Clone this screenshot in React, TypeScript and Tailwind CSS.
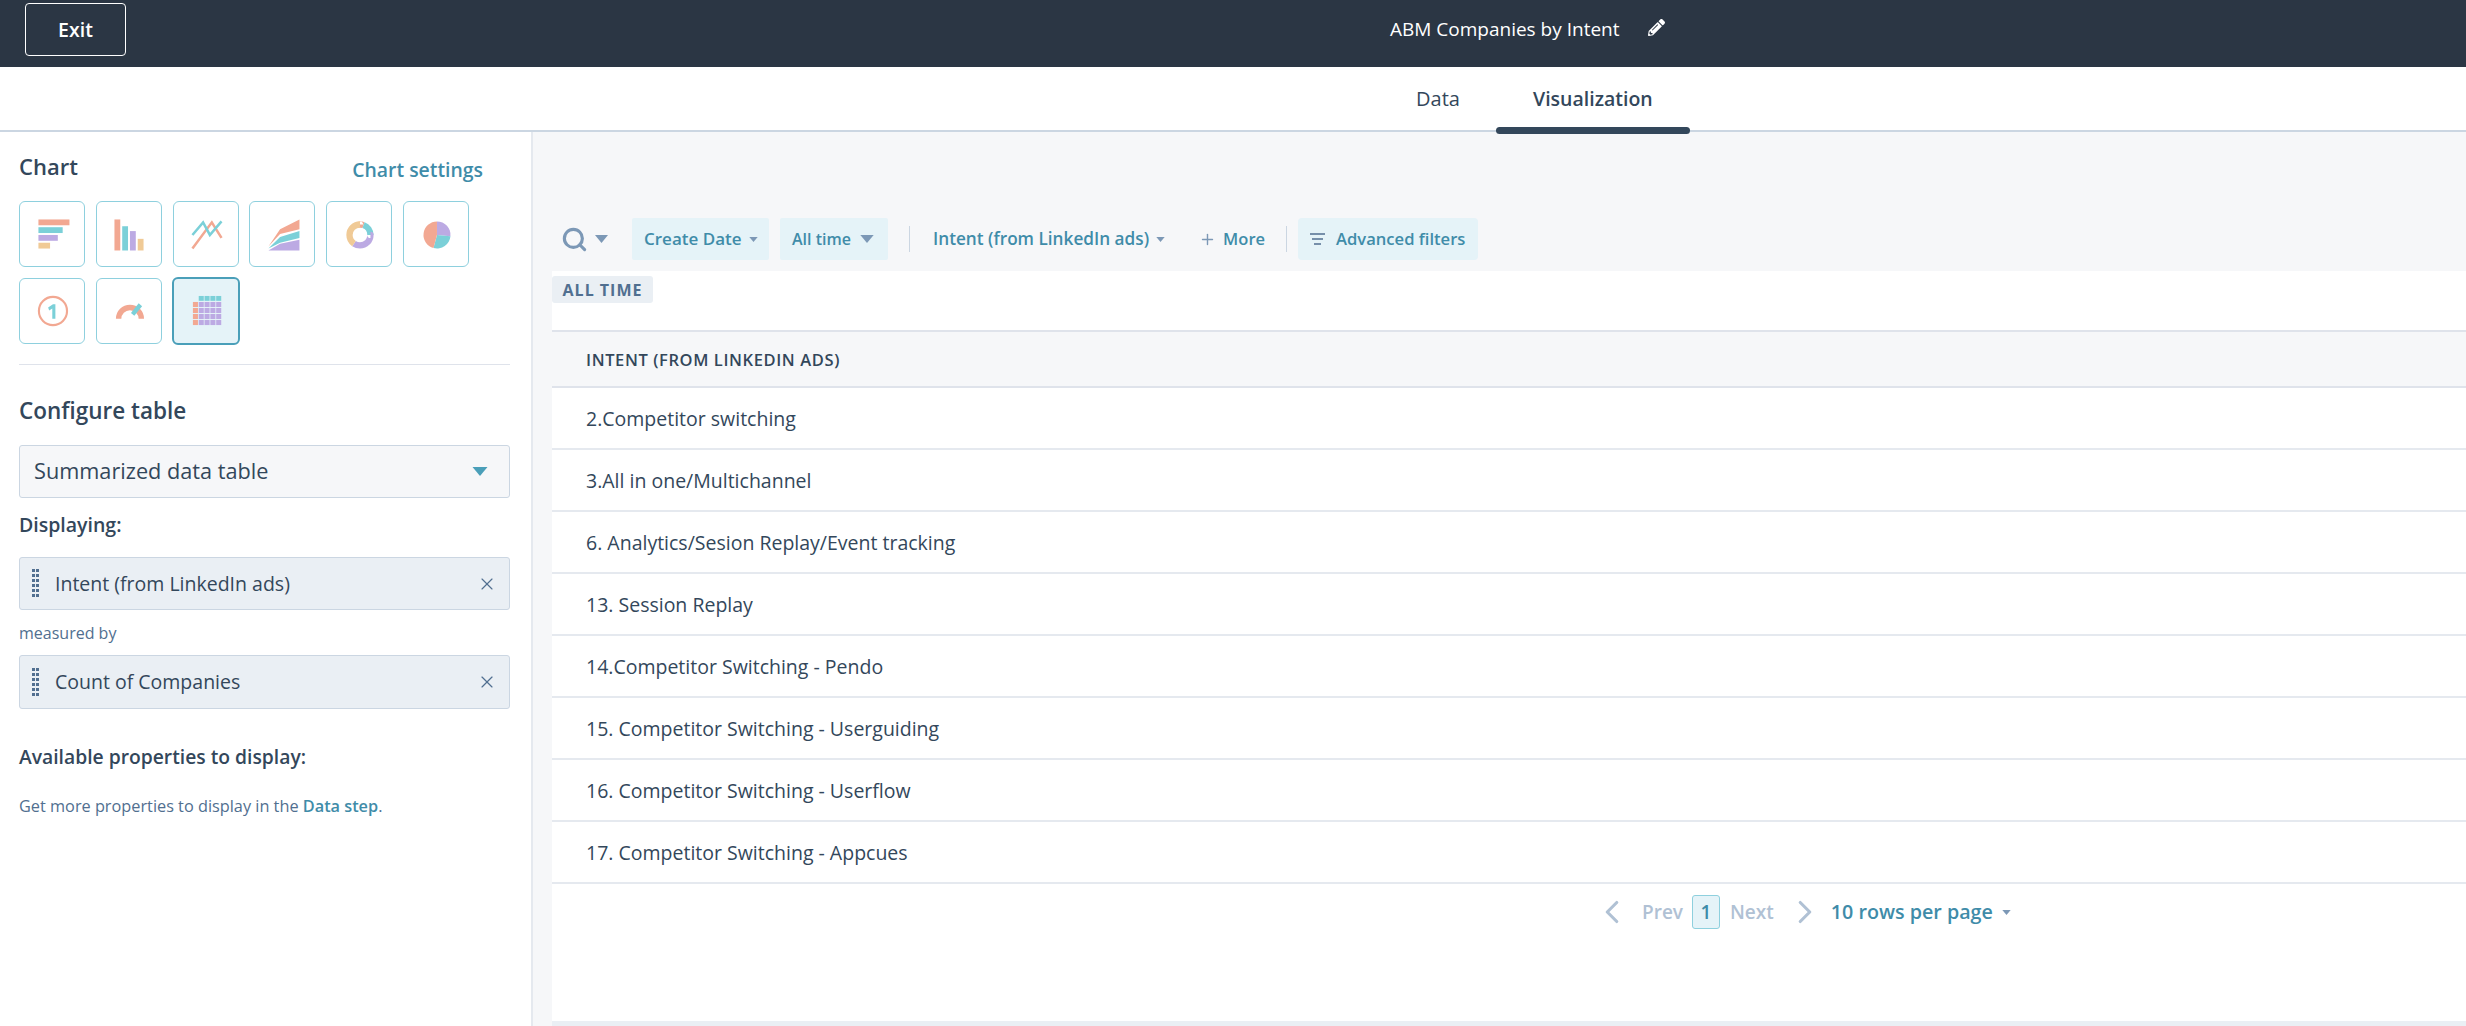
import { ChevronLeft, ChevronRight, Plus, Search, X } from 'lucide-react';
import { FaPencilAlt } from 'react-icons/fa';

const rows = [
  '2.Competitor switching',
  '3.All in one/Multichannel',
  '6. Analytics/Sesion Replay/Event tracking',
  '13. Session Replay',
  '14.Competitor Switching - Pendo',
  '15. Competitor Switching - Userguiding',
  '16. Competitor Switching - Userflow',
  '17. Competitor Switching - Appcues',
];

const coral = '#f2a892';
const teal = '#7bd0d8';
const purple = '#bcaae3';
const sand = '#f0ca96';

const Caret = ({ className }: { className: string }) => (
  <svg viewBox="0 0 10 6" className={className} fill="currentColor">
    <path d="M0 0h10L5 6z" />
  </svg>
);

const Icon = ({ children }: { children: React.ReactNode }) => (
  <svg viewBox="0 0 66 66" className="w-full h-full">{children}</svg>
);

const arc = (r: number, color: string, dash: string, offset: number) => (
  <circle cx="34" cy="34" r={r} fill="none" stroke={color} strokeWidth="6.5" pathLength={360} strokeDasharray={dash} strokeDashoffset={offset} transform="rotate(-90 34 34)" />
);

const chartIcons = [
  <Icon key="bar">
    <rect x="19" y="18" width="32" height="6" fill={coral} />
    <rect x="19" y="26" width="25" height="6" fill={teal} />
    <rect x="19" y="34" width="20" height="6" fill={purple} />
    <rect x="19" y="42" width="12" height="6" fill={sand} />
  </Icon>,
  <Icon key="column">
    <rect x="18" y="18" width="6" height="32" fill={coral} />
    <rect x="26" y="25" width="6" height="25" fill={teal} />
    <rect x="34" y="30" width="6" height="20" fill={purple} />
    <rect x="42" y="38" width="6" height="12" fill={sand} />
  </Icon>,
  <Icon key="line">
    <polyline points="19,48 39,21 49,37" fill="none" stroke={coral} strokeWidth="2.6" />
    <polyline points="19,34 30,21 37,34 49,20" fill="none" stroke={teal} strokeWidth="2.6" />
  </Icon>,
  <Icon key="area">
    <polygon points="19,46 31,28 51,18 51,28 31,33" fill={coral} />
    <polygon points="19,48 31,36 51,30 51,37 31,42" fill={teal} />
    <polygon points="19,50 31,43 51,39 51,50" fill={purple} />
  </Icon>,
  <Icon key="donut">
    {arc(10.8, coral, '20 340', 0)}
    {arc(10.8, teal, '70 290', -20)}
    {arc(10.8, purple, '125 235', -90)}
    {arc(10.8, sand, '145 215', -215)}
  </Icon>,
  <Icon key="pie">
    <path d="M34 34V20A14 14 0 0 1 47.9 35.2z" fill={purple} />
    <path d="M34 34L47.9 35.2A14 14 0 0 1 30.4 47.5z" fill={teal} />
    <path d="M34 34L30.4 47.5A14 14 0 0 1 34 20z" fill={coral} />
  </Icon>,
  <Icon key="kpi">
    <circle cx="34" cy="33" r="14.5" fill="none" stroke={coral} strokeWidth="2.2" />
    <path d="M29 29.5l5-3.5h2.5v15h-3.2V30.5l-3.2 2z" fill={teal} />
  </Icon>,
  <Icon key="gauge">
    <path d="M19.5 41a14.5 14.5 0 0 1 29 0h-5.6a8.9 8.9 0 0 0-17.8 0z" fill={coral} />
    <path d="M35 35l8-10 3.5 3-8 10z" fill={teal} />
  </Icon>,
];

const gridCells = [0, 1, 2, 3, 4];

const TableIcon = () => (
  <Icon>
    {gridCells.slice(1).map((c) => (
      <rect key={c} x={19.5 + c * 6} y="17.5" width="5.2" height="5" fill={teal} />
    ))}
    {gridCells.slice(1).map((r) =>
      gridCells.map((c) => (
        <rect key={`${r}-${c}`} x={19.5 + c * 6} y={17.5 + r * 6.2} width="5.2" height="5.2" fill={c === 0 ? coral : purple} />
      )),
    )}
  </Icon>
);

const Grip = () => (
  <svg viewBox="0 0 7 29" className="w-[7px] h-[29px]" fill="#516f90">
    {[0, 5, 10, 15, 20, 25].map((y) => (
      <g key={y}>
        <rect x="0" y={y} width="3" height="3" />
        <rect x="4" y={y} width="3" height="3" />
      </g>
    ))}
  </svg>
);

const Chip = ({ label, className }: { label: string; className: string }) => (
  <div className={`${className} flex items-center bg-[#eaeff4] border border-[#cbd6e2] rounded-[3px] pl-[12px] pr-[12px] text-[19.5px] text-[#33475b]`}>
    <Grip />
    <span className="ml-[16px] flex-1">{label}</span>
    <X size={20} strokeWidth={1.4} className="text-[#516f90]" />
  </div>
);

const App = () => {
  return (
    <div className="w-[2466px] h-[1026px] overflow-hidden flex flex-col bg-[#f6f7f9] text-[#33475b] font-['Open_Sans',sans-serif]">
      <header className="h-[67px] shrink-0 bg-[#2b3644] flex items-start pl-[25px] pt-[3px] text-white">
        <button className="w-[101px] h-[53px] border border-white rounded-[4px] text-[19.5px] font-semibold">Exit</button>
        <span className="ml-[1264px] mt-[11px] text-[19px] leading-[30px]">ABM Companies by Intent</span>
        <FaPencilAlt className="ml-[28px] mt-[16px] text-[17px]" />
      </header>

      <nav className="h-[65px] shrink-0 bg-white border-b-2 border-[#cbd6e2] flex pl-[1416px] text-[20px]">
        <span className="mt-[19px] leading-[26px]">Data</span>
        <div className="relative ml-[36px] w-[194px] text-center font-semibold text-[19.5px]">
          <span className="mt-[19px] inline-block leading-[26px]">Visualization</span>
          <div className="absolute left-0 right-0 top-[60px] h-[7px] rounded-full bg-[#33475b]" />
        </div>
      </nav>

      <div className="flex-1 flex min-h-0">
        <aside className="w-[533px] shrink-0 bg-white border-r-2 border-[#e5e9ef] pl-[19px] pr-[21px] pt-[22px]">
          <div className="h-[47px] flex items-start justify-between pr-[27px]">
            <h2 className="text-[22px] leading-[24px] font-semibold">Chart</h2>
            <a className="mt-[4px] text-[19.4px] leading-[24px] font-semibold text-[#3f8ca9]">Chart settings</a>
          </div>

          <div className="flex flex-wrap gap-x-[10.8px] gap-y-[11px]">
            {chartIcons.map((icon) => (
              <div key={icon.key} className="w-[66px] h-[66px] border border-[#8ed0de] rounded-[6px] bg-white">
                {icon}
              </div>
            ))}
            <div className="w-[68px] h-[68px] -m-px border-2 border-[#4a9fb9] rounded-[6px] bg-[#e5f3f8]">
              <TableIcon />
            </div>
          </div>

          <div className="mt-[20px] h-px bg-[#dfe3eb]" />

          <h2 className="mt-[32px] text-[22.5px] leading-[28px] font-semibold">Configure table</h2>
          <div className="mt-[20px] h-[53px] flex items-center justify-between bg-[#f6f7f9] border border-[#cbd6e2] rounded-[3px] pl-[14px] pr-[21px] text-[21.7px]">
            <span>Summarized data table</span>
            <Caret className="w-[16px] h-[9px] text-[#4a9fb9]" />
          </div>

          <h3 className="mt-[15px] text-[19.5px] leading-[24px] font-semibold">Displaying:</h3>
          <Chip label="Intent (from LinkedIn ads)" className="mt-[20px] h-[53px]" />
          <p className="mt-[13px] text-[16px] leading-[20px] text-[#516f90]">measured by</p>
          <Chip label="Count of Companies" className="mt-[12px] h-[54px]" />

          <h3 className="mt-[36px] text-[19.3px] leading-[24px] font-semibold">Available properties to display:</h3>
          <p className="mt-[27px] text-[16.3px] leading-[20px] text-[#516f90]">
            Get more properties to display in the <a className="font-semibold text-[#3f8ca9]">Data step</a>.
          </p>
        </aside>

        <main className="flex-1 min-w-0 flex flex-col pl-[19px]">
          <div className="mt-[86px] h-[42px] flex items-center text-[17px] font-semibold text-[#3f8ca9]">
            <Search size={27} strokeWidth={2.8} className="ml-[9px] text-[#7c98b6]" />
            <Caret className="ml-[7px] w-[13px] h-[8px] text-[#7c98b6]" />
            <div className="ml-[24px] w-[137px] h-full flex items-center pl-[12px] bg-[#e5f3f8] rounded-[2px]">
              <span>Create Date</span>
              <Caret className="ml-[6px] w-[11px] h-[5px] text-[#7c98b6]" />
            </div>
            <div className="ml-[11px] w-[108px] h-full flex items-center pl-[12px] bg-[#e5f3f8] rounded-[2px]">
              <span className="text-[16px]">All time</span>
              <Caret className="ml-[9px] w-[14px] h-[8px] text-[#7c98b6]" />
            </div>
            <div className="ml-[21px] w-px h-[26px] bg-[#cbd6e2]" />
            <span className="ml-[23px] text-[17.2px]">Intent (from LinkedIn ads)</span>
            <Caret className="ml-[6px] w-[11px] h-[5px] text-[#7c98b6]" />
            <Plus size={17} strokeWidth={2} className="ml-[33px] text-[#7c98b6]" />
            <span className="ml-[7px] text-[16.5px]">More</span>
            <div className="ml-[21px] w-px h-[26px] bg-[#cbd6e2]" />
            <div className="ml-[11px] w-[180px] h-full flex items-center pl-[12px] bg-[#e5f3f8] rounded-[4px]">
              <svg viewBox="0 0 15 14" className="w-[15px] h-[14px]" fill="none" stroke="#516f90" strokeWidth="1.6">
                <path d="M0 2h15M2 7h11M4 12h7" />
              </svg>
              <span className="ml-[11px] text-[16.6px]">Advanced filters</span>
            </div>
          </div>

          <section className="mt-[11px] flex-1 bg-white">
            <div className="mt-[5px] w-[101px] h-[27px] flex items-center justify-center bg-[#eaeff4] rounded-[3px] text-[16px] tracking-[1px] font-bold text-[#516f90]">ALL TIME</div>
            <div className="mt-[27px] h-[58px] flex items-center pl-[34px] pt-[3px] bg-[#f6f7f9] border-y-2 border-[#dfe3eb] text-[16.5px] tracking-[0.6px] font-semibold">
              INTENT (FROM LINKEDIN ADS)
            </div>
            {rows.map((row) => (
              <div key={row} className="h-[62px] flex items-center pl-[34px] pt-[2px] border-b-2 border-[#e5e9ef] text-[19.5px]">
                {row}
              </div>
            ))}
            <div className="mt-[11px] ml-[1041px] h-[34px] flex items-center text-[19px] font-semibold">
              <ChevronLeft size={38} strokeWidth={2} className="text-[#b0c1d4]" />
              <span className="ml-[11px] text-[#b0c1d4]">Prev</span>
              <span className="ml-[9px] w-[28px] h-[34px] flex items-center justify-center bg-[#e5f3f8] border border-[#8ed0de] rounded-[3px] text-[#3f8ca9]">1</span>
              <span className="ml-[10px] text-[#b0c1d4]">Next</span>
              <ChevronRight size={38} strokeWidth={2} className="ml-[12px] text-[#b0c1d4]" />
              <span className="ml-[7px] text-[19.7px] text-[#3f8ca9]">10 rows per page</span>
              <Caret className="ml-[9px] w-[9px] h-[5px] text-[#7c98b6]" />
            </div>
          </section>
          <div className="h-[5px] shrink-0 bg-[#eaeff4]" />
        </main>
      </div>
    </div>
  );
};

export default App;
